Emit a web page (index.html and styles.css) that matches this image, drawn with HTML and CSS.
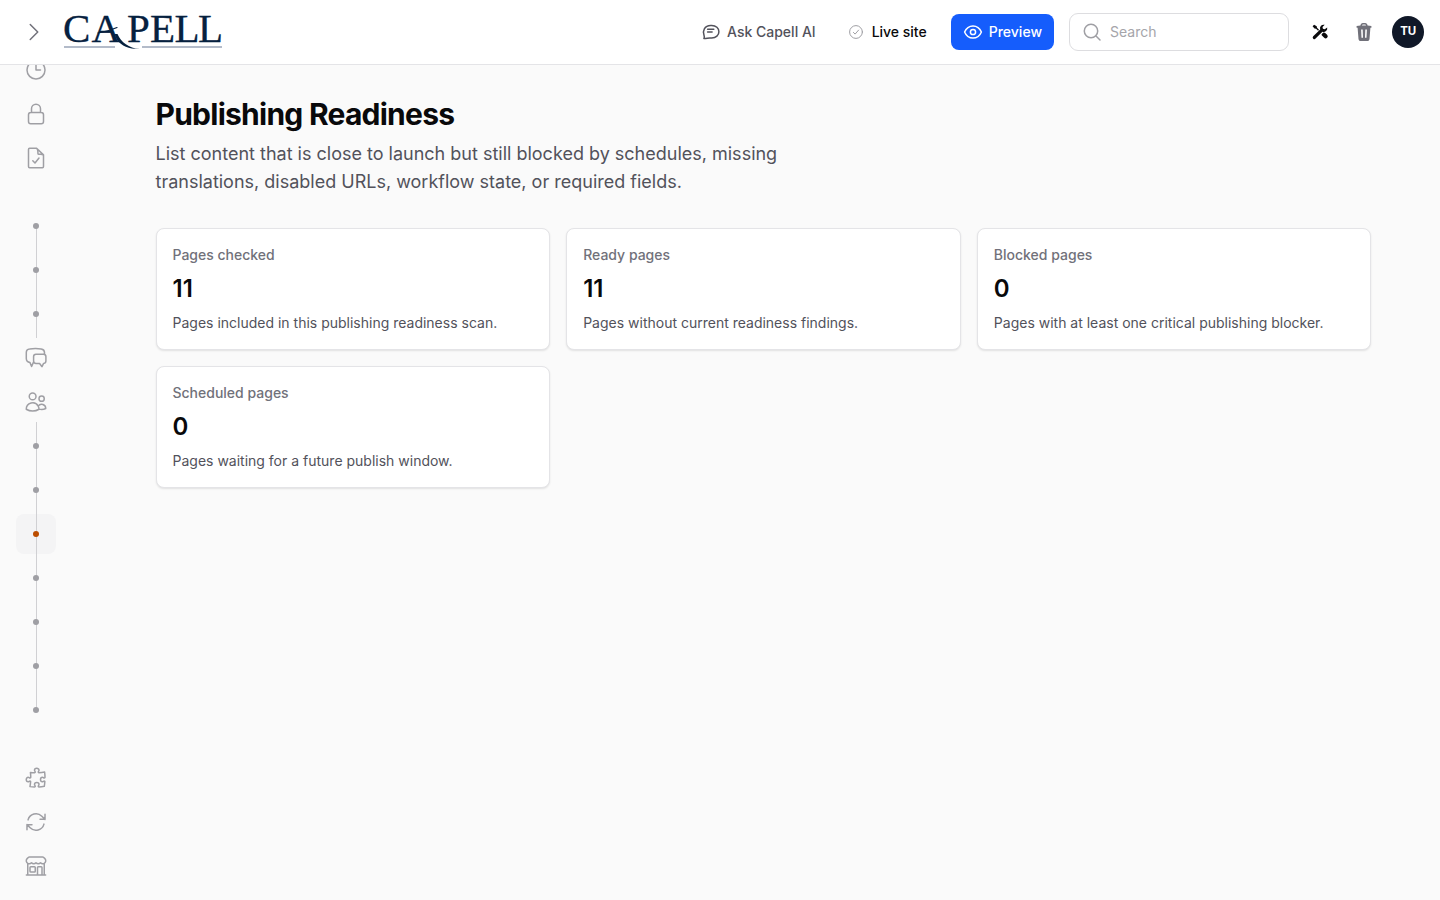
FILE: index.html
```html
<!DOCTYPE html>
<html lang="en">
<head>
  <meta charset="UTF-8" />
  <meta name="viewport" content="width=device-width, initial-scale=1.0" />
  <title>Publishing Readiness - Capell</title>
  <link rel="stylesheet" href="styles.css">
</head>
<body>
  <header class="topbar">
    <button class="expand" aria-label="Expand sidebar">
      <svg class="icon" viewBox="0 0 24 24"><path d="m8.25 4.5 7.5 7.5-7.5 7.5"/></svg>
    </button>
    <a class="logo" href="#">
      <svg width="172" height="56" viewBox="-4 -8 172 56">
        <text x="-1 27.500 63 86 110.500 134" y="30">CAPELL</text>
        <path class="tail" d="M50.500 22l3 0C57 30.500 65 36 75.500 37 65.500 37.200 57.500 34 53 28z"/>
        <path class="swash" d="M34 21Q44 19.600 53 15.500"/>
        <path class="rule" d="M0 35h51M78 35h80"/>
      </svg>
    </a>
    <nav class="actions">
      <a class="action ask" href="#">
        <svg viewBox="0 0 20 20"><path d="M2.900 16.600C3.500 15.600 3.500 14.600 3 13.300 1.300 9.200 3.400 3.500 9.700 3.500h1c4.300 0 7.200 2.700 7.200 6.200s-2.900 6.200-7.200 6.200H8.800c-1.900 0-3.500.8-5.900.7zM6.600 7.300h6.200M6.600 10h4.500"/></svg>
        Ask Capell AI
      </a>
      <a class="action live" href="#">
        <svg viewBox="0 0 16 16"><circle cx="8" cy="8" r="6.400"/><path d="m5.400 8.400 1.700 1.700 3.500-4"/></svg>
        Live site
      </a>
      <a class="action preview" href="#">
        <svg viewBox="0 0 20 20"><path d="M1.600 10C3.100 6.400 6.200 3.900 10 3.900s6.900 2.500 8.400 6.100c-1.500 3.600-4.600 6.100-8.400 6.100S3.100 13.600 1.600 10z"/><circle cx="10" cy="10" r="2.600"/></svg>
        Preview
      </a>
    </nav>
    <label class="search">
      <svg viewBox="0 0 20 20"><circle cx="9" cy="9" r="6.700"/><path d="m14 14 4 4"/></svg>
      <input type="text" placeholder="Search">
    </label>
    <button class="tool dark" aria-label="Tools">
      <svg viewBox="0 0 20 20">
        <path d="M2.600 4.200 4.100 2.700l2.600 1.500.3 1.600 2 2-.9.900-2-2-1.600-.3zM11.600 12.300l1.800-1.700c.8-.2 1.500 0 2.100.6l1.600 1.600a2 2 0 0 1-2.900 2.900l-2.500-2.500z"/>
        <path d="M17.200 5.400a3.700 3.700 0 0 1-4.800 4.300l-6.800 6.900a1.600 1.600 0 0 1-2.400-2.300l7-6.700a3.700 3.700 0 0 1 4.500-4.800l-2.200 2.300.4 1.700 1.800.4z"/>
      </svg>
    </button>
    <button class="tool" aria-label="Trash">
      <svg viewBox="0 0 20 20"><path fill-rule="evenodd" d="M6.400 3.600C6.600 2 7.500 1 8.900 1h2.200c1.400 0 2.300 1 2.500 2.600l3.800.3v1.800h-1l-.9 11.200c-.1 1.200-1 2.100-2.200 2.100H6.700c-1.200 0-2.100-.9-2.200-2.100L3.600 5.700h-1V3.900zm1.600-.1h4c-.1-.7-.4-1-1-1H9c-.6 0-.9.300-1 1zM7.100 7.500l.4 8.200h1.500l-.3-8.200zM12.900 7.500l-.4 8.200H11l.3-8.200z"/></svg>
    </button>
    <div class="avatar">TU</div>
  </header>

  <div class="layout">
    <aside class="sidebar">
      <ul class="group">
        <li><svg class="icon" viewBox="0 0 24 24"><path d="M12 6v6h4.500M21 12a9 9 0 1 1-18 0 9 9 0 0 1 18 0Z"/></svg></li>
        <li><svg class="icon" viewBox="0 0 24 24"><path d="M16.500 10.500V6.750a4.500 4.500 0 1 0-9 0v3.750m-.75 11.250h10.500a2.250 2.250 0 0 0 2.250-2.250v-6.750a2.250 2.250 0 0 0-2.250-2.250H6.750a2.250 2.250 0 0 0-2.250 2.250v6.750a2.250 2.250 0 0 0 2.250 2.250Z"/></svg></li>
        <li><svg class="icon" viewBox="0 0 24 24"><path d="M4.500 3.400c0-.6.500-1.100 1.100-1.100H12.600l6.900 6.600v11.700c0 .6-.5 1.100-1.100 1.100H5.600c-.6 0-1.100-.5-1.100-1.100zM12.600 2.300c1 1 1.300 2 1.300 3.400v1.500c0 .6.500 1.100 1.100 1.100h1.500c1.300 0 2.400.2 3 .8M8.800 14.700l2.200 2.300 4-5"/></svg></li>
      </ul>
      <ul class="group">
        <li class="node first"><span class="line"></span></li>
        <li class="node"><span class="line"></span></li>
        <li class="node"><span class="line"></span></li>
        <li><svg class="icon" viewBox="0 0 24 24"><path d="M9.600 15.900 7.600 20.500 6 16.600C3.800 16.200 2.300 15 2.300 12.600V6.500c0-2.100 1.300-3.400 3.300-3.600 4-.6 7.800-.6 11.600 0 2.200.3 3.300 1.500 3.300 3.600v1.700M12 8.200h7.500c1.500 0 2.400.9 2.400 2.400V15c0 1.500-.9 2.300-2.300 2.400L18 20.700l-2.400-3.200H12c-1.600 0-2.400-.9-2.400-2.400v-4.500c0-1.500.9-2.400 2.400-2.400z"/></svg></li>
        <li><svg class="icon" viewBox="0 0 24 24"><path d="M15 19.128a9.380 9.380 0 0 0 2.625.372 9.337 9.337 0 0 0 4.121-.952 4.125 4.125 0 0 0-7.533-2.493M15 19.128v-.003c0-1.113-.285-2.160-.786-3.070M15 19.128v.106A12.318 12.318 0 0 1 8.624 21c-2.331 0-4.512-.645-6.374-1.766l-.001-.109a6.375 6.375 0 0 1 11.964-3.070M12 6.375a3.375 3.375 0 1 1-6.750 0 3.375 3.375 0 0 1 6.750 0Zm8.250 2.250a2.625 2.625 0 1 1-5.250 0 2.625 2.625 0 0 1 5.250 0Z"/></svg></li>
        <li class="node"><span class="line"></span></li>
        <li class="node"><span class="line"></span></li>
        <li class="node active"><span class="line"></span></li>
        <li class="node"><span class="line"></span></li>
        <li class="node"><span class="line"></span></li>
        <li class="node"><span class="line"></span></li>
        <li class="node last"><span class="line"></span></li>
      </ul>
      <ul class="group">
        <li><svg class="icon" viewBox="0 0 24 24"><path d="M14.250 6.087c0-.355.186-.676.401-.959.221-.290.349-.634.349-1.003 0-1.036-1.007-1.875-2.250-1.875s-2.250.840-2.250 1.875c0 .369.128.713.349 1.003.215.283.401.604.401.959a.640.640 0 0 1-.657.643 48.390 48.390 0 0 1-4.163-.300c.186 1.613.293 3.250.315 4.907a.656.656 0 0 1-.658.663c-.355 0-.676-.186-.959-.401a1.647 1.647 0 0 0-1.003-.349c-1.036 0-1.875 1.007-1.875 2.250s.840 2.250 1.875 2.250c.369 0 .713-.128 1.003-.349.283-.215.604-.401.959-.401.310 0 .555.260.532.570a48.039 48.039 0 0 1-.642 5.056c1.518.190 3.058.309 4.616.354a.640.640 0 0 0 .657-.643c0-.355-.186-.676-.401-.959a1.647 1.647 0 0 1-.349-1.003c0-1.035 1.008-1.875 2.250-1.875 1.243 0 2.250.840 2.250 1.875 0 .369-.128.713-.349 1.003-.215.283-.400.604-.400.959 0 .333.277.599.610.580a48.100 48.100 0 0 0 5.427-.630 48.050 48.050 0 0 0 .582-4.717.532.532 0 0 0-.533-.570c-.355 0-.676.186-.959.401-.290.221-.634.349-1.003.349-1.035 0-1.875-1.007-1.875-2.250s.840-2.250 1.875-2.250c.370 0 .713.128 1.003.349.283.215.604.401.960.401a.656.656 0 0 0 .658-.663 48.422 48.422 0 0 0-.370-5.360c-1.886.342-3.810.574-5.766.689a.578.578 0 0 1-.610-.580Z"/></svg></li>
        <li><svg class="icon" viewBox="0 0 24 24"><path d="M16.023 9.348h4.992M2.985 19.644v-4.992h4.992m-4.993 0 3.181 3.183a8.250 8.250 0 0 0 13.803-3.700M4.031 9.865a8.250 8.250 0 0 1 13.803-3.700l3.181 3.182m0-4.991v4.990"/></svg></li>
        <li><svg class="icon" viewBox="0 0 24 24"><path d="M13.500 21v-7.500a.75.75 0 0 1 .75-.75h3a.75.75 0 0 1 .75.75V21M2.360 21h19.280M20.250 21V9.349M3.750 21V9.349m0 0a3.001 3.001 0 0 0 3.750-.615A2.993 2.993 0 0 0 9.750 9.750c.896 0 1.700-.393 2.250-1.016a2.993 2.993 0 0 0 2.250 1.016c.896 0 1.700-.393 2.250-1.015a3.001 3.001 0 0 0 3.750.614m-16.500 0a3.004 3.004 0 0 1-.621-4.720l1.189-1.190A1.500 1.500 0 0 1 5.378 3h13.243a1.500 1.500 0 0 1 1.060.440l1.190 1.189a3 3 0 0 1-.621 4.720M6.750 18h3.750a.75.75 0 0 0 .75-.75V13.500a.75.75 0 0 0-.75-.75H6.750a.75.75 0 0 0-.75.75v3.750c0 .414.336.75.75.75Z"/></svg></li>
      </ul>
    </aside>

    <main class="content">
      <h1>Publishing Readiness</h1>
      <p class="subtitle">List content that is close to launch but still blocked by schedules, missing translations, disabled URLs, workflow state, or required fields.</p>
      <div class="stats">
        <section class="card">
          <div class="label">Pages checked</div>
          <div class="value">11</div>
          <div class="desc">Pages included in this publishing readiness scan.</div>
        </section>
        <section class="card">
          <div class="label">Ready pages</div>
          <div class="value">11</div>
          <div class="desc">Pages without current readiness findings.</div>
        </section>
        <section class="card">
          <div class="label">Blocked pages</div>
          <div class="value">0</div>
          <div class="desc">Pages with at least one critical publishing blocker.</div>
        </section>
        <section class="card">
          <div class="label">Scheduled pages</div>
          <div class="value">0</div>
          <div class="desc">Pages waiting for a future publish window.</div>
        </section>
      </div>
    </main>
  </div>
</body>
</html>
```
FILE: styles.css
```css
* {
  box-sizing: border-box;
}
body {
  margin: 0;
  height: 100vh;
  overflow: hidden;
  display: flex;
  flex-direction: column;
  background: #fafafa;
  color: #09090b;
  font-family: Inter, sans-serif;
  font-size: 14px;
  line-height: 20px;
}
button {
  border: 0;
  padding: 0;
  background: none;
}
a {
  color: inherit;
  text-decoration: none;
}
svg {
  display: block;
  flex: none;
  fill: none;
  stroke: currentColor;
  stroke-width: 1.5;
  stroke-linecap: round;
  stroke-linejoin: round;
}
.icon {
  width: 24px;
  height: 24px;
}

/* top bar */
.topbar {
  flex: none;
  height: 65px;
  display: flex;
  align-items: center;
  padding: 0 16px 0 22px;
  background: #fff;
  border-bottom: 1px solid #e4e4e7;
}
.expand {
  color: #71717a;
  margin-right: 14px;
}
.logo text {
  font-family: "Liberation Serif", serif;
  font-size: 41px;
  fill: #06213f;
  stroke: #06213f;
  stroke-width: 0.3;
}
.logo .tail {
  fill: #06213f;
  stroke: none;
}
.logo .swash {
  stroke: #06213f;
  stroke-width: 1.2;
}
.logo .rule {
  stroke: #9aa5b8;
  stroke-width: 1.5;
  stroke-linecap: butt;
}
.actions {
  display: flex;
  align-items: center;
  margin-left: auto;
}
.action {
  display: flex;
  align-items: center;
  font-weight: 500;
}
.action svg {
  width: 20px;
  height: 20px;
}
.ask {
  gap: 6px;
  color: #52525b;
  margin-right: 32px;
}
.live {
  gap: 8px;
  margin-right: 24px;
}
.action.live svg {
  width: 16px;
  height: 16px;
  color: #9f9fa4;
  stroke-width: 1;
}
.preview {
  gap: 6px;
  height: 36px;
  padding: 0 12px;
  border-radius: 8px;
  background: #155dfc;
  color: #fff;
}
.search {
  display: flex;
  align-items: center;
  gap: 8px;
  width: 220px;
  height: 38px;
  margin-left: 15px;
  padding: 0 12px;
  border: 1px solid #dddde0;
  border-radius: 9px;
  color: #9f9fa4;
}
.search svg {
  width: 20px;
  height: 20px;
}
.search input {
  width: 100%;
  min-width: 0;
  padding: 0;
  border: 0;
  background: none;
  font: inherit;
}
.search input::placeholder {
  color: #a5a5aa;
}
.tool {
  margin-left: 24px;
  color: #71717a;
}
.dark {
  margin-left: 21px;
  color: #09090b;
}
.tool svg {
  width: 20px;
  height: 20px;
  fill: currentColor;
  stroke: none;
}
.avatar {
  width: 32px;
  height: 32px;
  margin-left: 18px;
  border-radius: 50%;
  background: #101828;
  color: #fff;
  font-size: 11.5px;
  font-weight: 700;
  letter-spacing: -0.3px;
  line-height: 31px;
  text-align: center;
}

/* sidebar, scrolled slightly under the top bar */
.layout {
  flex: 1;
  min-height: 0;
  display: flex;
}
.sidebar {
  width: 72px;
  overflow: hidden;
  display: flex;
  flex-direction: column;
  gap: 28px;
}
.group {
  flex: none;
  margin: 0;
  padding: 0 16px;
  list-style: none;
  display: flex;
  flex-direction: column;
  gap: 4px;
}
.group:first-child {
  margin-top: -15px;
}
.group li {
  height: 40px;
  display: flex;
  align-items: center;
  justify-content: center;
  border-radius: 8px;
  color: #9f9fa4;
}
.node {
  position: relative;
}
.node::after {
  content: "";
  position: relative;
  width: 6px;
  height: 6px;
  border-radius: 50%;
  background: #9f9fa4;
}
.line {
  position: absolute;
  left: 20px;
  top: -4px;
  bottom: -4px;
  width: 1px;
  background: #d0d0d3;
}
.first .line {
  top: 50%;
}
.last .line {
  bottom: 50%;
}
.group .active {
  background: #f4f4f5;
}
.active::after {
  background: #bb4d00;
}

/* page */
.content {
  flex: 1;
  padding: 31px 68.5px 0 83.5px;
}
h1 {
  margin: 0;
  font-size: 30px;
  line-height: 36px;
  font-weight: 700;
  letter-spacing: -0.75px;
}
.subtitle {
  max-width: 672px;
  margin: 8px 0 32px;
  font-size: 18px;
  line-height: 28px;
  color: #52525b;
}
.stats {
  display: grid;
  grid-template-columns: repeat(3, 1fr);
  gap: 16px;
}
.card {
  display: flex;
  flex-direction: column;
  gap: 8px;
  padding: 16px;
  border: 1px solid #e4e4e7;
  border-radius: 8px;
  background: #fff;
  box-shadow: 0 1px 2px rgba(0, 0, 0, 0.1);
}
.label {
  font-weight: 500;
  color: #71717a;
}
.value {
  font-size: 24px;
  line-height: 32px;
  font-weight: 600;
}
.desc {
  color: #52525b;
}
```
